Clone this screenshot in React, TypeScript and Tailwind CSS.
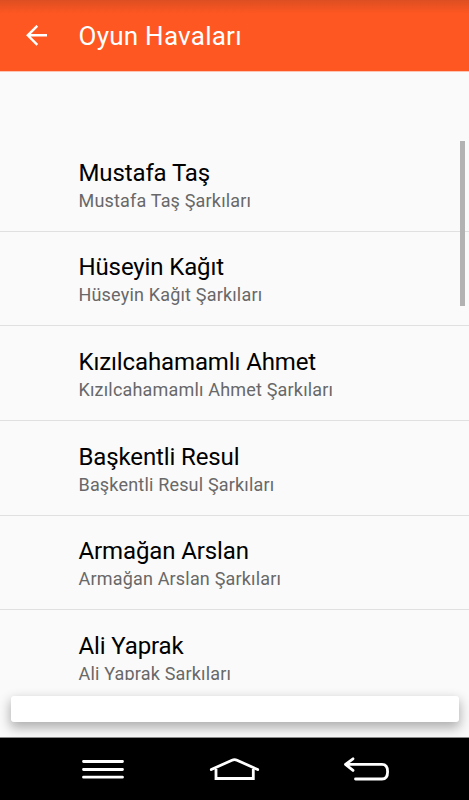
import React from "react";

interface Artist {
  name: string;
  description: string;
}

const artists: Artist[] = [
  { name: "Mustafa Taş", description: "Mustafa Taş Şarkıları" },
  { name: "Hüseyin Kağıt", description: "Hüseyin Kağıt Şarkıları" },
  { name: "Kızılcahamamlı Ahmet", description: "Kızılcahamamlı Ahmet Şarkıları" },
  { name: "Başkentli Resul", description: "Başkentli Resul Şarkıları" },
  { name: "Armağan Arslan", description: "Armağan Arslan Şarkıları" },
  { name: "Ali Yaprak", description: "Ali Yaprak Şarkıları" },
];

const Header: React.FC = () => (
  <header className="flex h-[71px] shrink-0 items-center bg-[#ff5722] bg-linear-to-b from-[#dc4f22] to-[#ff5722] to-[14px] pl-[26px] text-white">
    <svg width="22" height="22" viewBox="0 0 22 22" fill="none" stroke="currentColor" strokeWidth="2.4" aria-label="Geri">
      <path d="M21 10.3H2M11.3 0.8L1.8 10.3L11.3 19.8" />
    </svg>
    <h1 className="ml-[30.5px] text-[26px] leading-[30px] font-[375] tracking-[0.25px]">Oyun Havaları</h1>
  </header>
);

const ArtistRow: React.FC<{ artist: Artist }> = ({ artist }) => (
  <li className="h-[94.65px] border-b border-[#e0e0e0] pt-[20.7px] pl-[78.5px] whitespace-nowrap">
    <div className="text-[24px] leading-[30px] font-[375] tracking-[-0.12px] text-black">{artist.name}</div>
    <div className="mt-px text-[18px] leading-[24px] font-[375] tracking-[0.18px] text-[#686868]">{artist.description}</div>
  </li>
);

const NavigationBar: React.FC = () => (
  <nav className="flex h-[63px] shrink-0 items-center justify-center border-t border-[#8a8a8a] bg-black text-white">
    <svg className="w-full" height="62" viewBox="0 0 469 62" fill="none" stroke="currentColor" strokeWidth="2.8" strokeLinecap="round" strokeLinejoin="round">
      <path d="M83.5 23.5H122.5M83.5 31.5H122.5M83.5 39.2H122.5" />
      <path d="M211.3 31.6L232 22.2Q234.5 21 237 22.2L257.7 31.6" />
      <path d="M216 31V40.5H253.3V31" strokeLinejoin="miter" strokeLinecap="butt" />
      <path d="M346 26.4H382Q387.6 26.4 387.6 33.7Q387.6 41 382 41H355.5M353 20.8L345.5 26.4L353 32.4" />
    </svg>
  </nav>
);

const App: React.FC = () => {
  return (
    <div className="flex h-screen flex-col overflow-hidden bg-[#fafafa] font-['Roboto',sans-serif]">
      <Header />
      <main className="relative h-[609px] shrink-0 overflow-hidden border-t border-[#fdc4b3] pt-[65px]">
        <ul>
          {artists.map((artist) => (
            <ArtistRow key={artist.name} artist={artist} />
          ))}
        </ul>
        {/* Scroll indicator */}
        <div className="absolute top-[69px] right-1 h-[165px] w-[5px] bg-[#b2b2b2]" />
      </main>
      <div className="flex min-h-0 flex-1 px-[10.5px] pt-4 pb-[15px]">
        <div className="w-full rounded-[3px] bg-white shadow-[0_5px_12px_1px_rgba(0,0,0,0.3)]" />
      </div>
      <NavigationBar />
    </div>
  );
};

export default App;
